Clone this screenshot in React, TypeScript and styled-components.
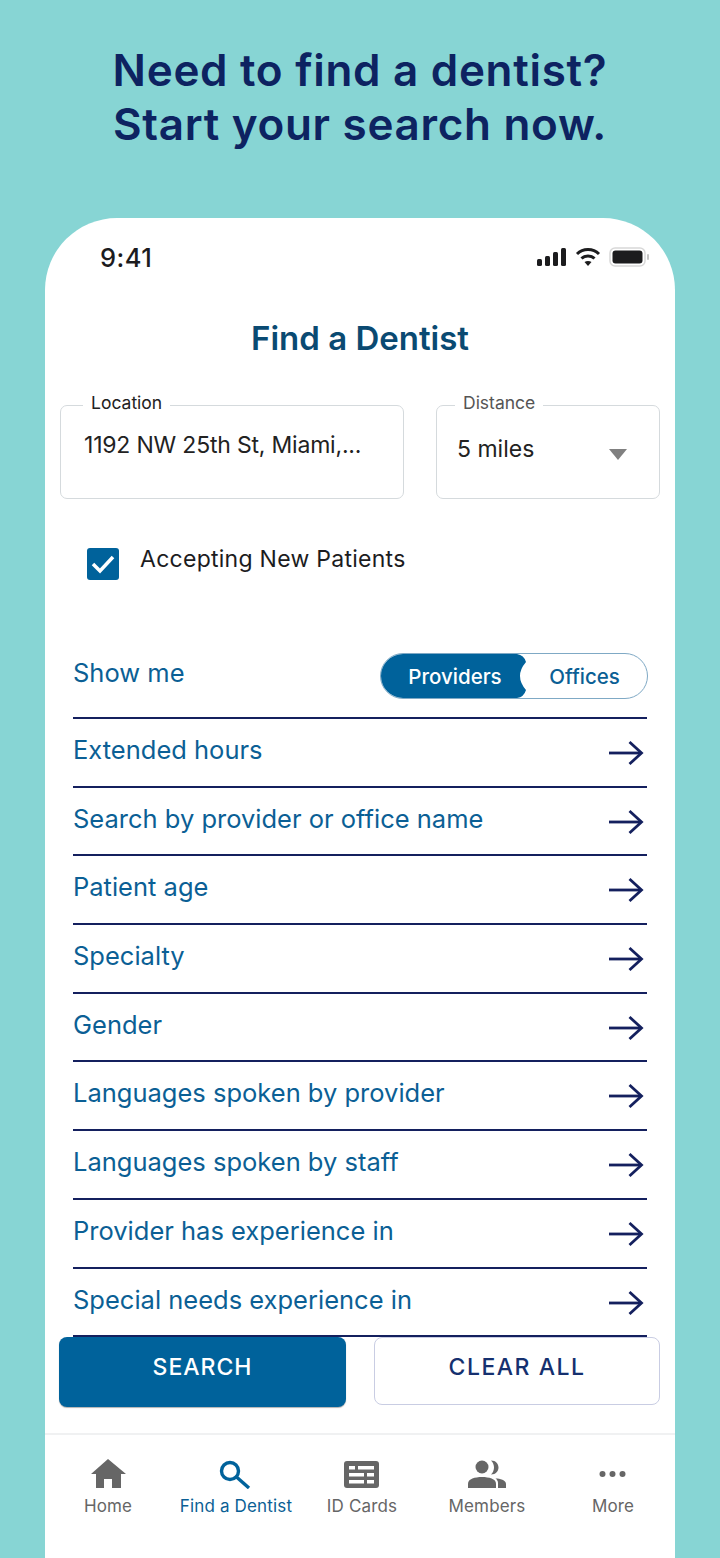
import React from "react";
import styled, {createGlobalStyle} from "styled-components";

const GlobalStyle = createGlobalStyle`
    html, body {
        margin: 0;
        padding: 0;
        background: #87d5d4;
    }

    body {
        font-family: Inter, "Noto Sans", sans-serif;
    }
`

const Page = styled.div`
    width: 720px;
    height: 1558px;
    overflow: hidden;
    display: flex;
    flex-direction: column;
    align-items: center;
    background: #87d5d4;
`

const Headline = styled.h1`
    margin: 43px 0 67px;
    font-size: 44px;
    line-height: 54px;
    font-weight: 600;
    letter-spacing: 0.7px;
    text-align: center;
    color: #0d2361;
`

const Phone = styled.div`
    width: 630px;
    flex: 1;
    display: flex;
    flex-direction: column;
    background: #fff;
    border-radius: 72px 72px 0 0;
`

const StatusBar = styled.div`
    height: 78px;
    padding: 0 25px 0 55px;
    display: flex;
    align-items: center;
    justify-content: space-between;
`

const Time = styled.span`
    font-size: 25.5px;
    font-weight: 500;
    letter-spacing: 0.5px;
    color: #1c1c1e;
`

const StatusIcons = styled.div`
    display: flex;
    align-items: center;
    gap: 8px;
`

const ScreenTitle = styled.h2`
    margin: 22px 0 0;
    font-size: 33px;
    line-height: 40px;
    font-weight: 600;
    text-align: center;
    color: #0a4a72;
`

const FieldRow = styled.div`
    margin-top: 35px;
    padding: 0 15px;
    display: flex;
    justify-content: space-between;
`

const Field = styled.fieldset<{$width: number}>`
    margin: 0;
    padding: 0;
    width: ${p => p.$width}px;
    height: 106px;
    box-sizing: border-box;
    border: 1.5px solid #d5dadd;
    border-radius: 7px;
`

const FieldLegend = styled.legend<{$inset: number; $muted?: boolean}>`
    margin-left: ${p => p.$inset}px;
    padding: 0 8px 4px;
    font-size: 17.5px;
    line-height: 20px;
    color: ${p => (p.$muted ? "#555" : "#222")};
`

const LocationValue = styled.div`
    padding: 13px 0 0 23px;
    font-size: 23px;
    line-height: 30px;
    letter-spacing: -0.2px;
    color: #222;
`

const DistanceValue = styled.div`
    padding: 17px 32px 0 20px;
    display: flex;
    align-items: center;
    justify-content: space-between;
    font-size: 23px;
    line-height: 30px;
    color: #222;
`

const Caret = styled.span`
    margin-top: 10px;
    width: 0;
    height: 0;
    border-left: 9px solid transparent;
    border-right: 9px solid transparent;
    border-top: 11px solid #808080;
`

const CheckRow = styled.div`
    margin-top: 46px;
    padding-left: 42px;
    display: flex;
    align-items: flex-start;
    gap: 21px;
`

const CheckBox = styled.span`
    margin-top: 3px;
    width: 32px;
    height: 32px;
    display: flex;
    align-items: center;
    justify-content: center;
    background: #00629b;
    border-radius: 3px;
`

const CheckLabel = styled.span`
    margin-top: -1px;
    font-size: 23px;
    line-height: 30px;
    letter-spacing: 0.27px;
    color: #1c1c1e;
`

const List = styled.div`
    margin-top: 73px;
    padding: 0 28px;
`

const ShowRow = styled.div`
    height: 64px;
    display: flex;
    align-items: flex-start;
    justify-content: space-between;
    border-bottom: 2px solid #14205e;
`

const RowLabel = styled.span`
    margin-top: 14px;
    font-size: 25.5px;
    line-height: 34px;
    color: #0b5f95;
`

const ShowLabel = styled(RowLabel)`
    margin-top: 3px;
`

const Toggle = styled.div`
    width: 268px;
    height: 46px;
    margin-right: -1px;
    box-sizing: border-box;
    display: flex;
    border: 1px solid #7fa9c5;
    border-radius: 23px;
`

const ToggleOption = styled.span<{$active?: boolean}>`
    box-sizing: border-box;
    display: flex;
    align-items: center;
    justify-content: center;
    font-size: 20.5px;
    font-weight: 500;
    color: ${p => (p.$active ? "#fff" : "#0b5f95")};
    background: ${p => (p.$active ? "#00629b" : "transparent")};
    width: ${p => (p.$active ? 145 : 117)}px;
    ${p => p.$active && `
        padding-left: 3px;
        clip-path: path("M22 0 H136 Q143 1 145 8 Q133 22 145 36 Q143 43 136 44 H22 A22 22 0 0 1 22 0 Z");
    `}
`

const Row = styled.div`
    height: 66.7px;
    display: flex;
    align-items: flex-start;
    justify-content: space-between;
    border-bottom: 2px solid #14205e;
`

const Arrow = styled.svg`
    margin: 21px 3px 0 0;
`

const ButtonRow = styled.div`
    padding: 0 15px 0 14px;
    display: flex;
    justify-content: space-between;
    align-items: flex-start;
`

const SearchButton = styled.div`
    width: 287px;
    height: 70px;
    display: flex;
    align-items: center;
    justify-content: center;
    box-sizing: border-box;
    padding-bottom: 10px;
    background: #00629b;
    border-radius: 8px;
    box-shadow: 0 1px 1px rgba(0, 0, 0, 0.3);
    font-size: 23px;
    font-weight: 500;
    letter-spacing: 1px;
    color: #fff;
`

const ClearButton = styled.div`
    width: 286px;
    height: 68px;
    display: flex;
    align-items: center;
    justify-content: center;
    box-sizing: border-box;
    padding-bottom: 8px;
    background: #fff;
    border: 1px solid #c9cde3;
    border-radius: 8px;
    font-size: 23px;
    font-weight: 500;
    letter-spacing: 1.5px;
    color: #15306f;
`

const TabBar = styled.nav`
    margin-top: 26px;
    flex: 1;
    display: grid;
    grid-template-columns: 126px 130px 122px 128px 124px;
    border-top: 2px solid #f0f1f2;
`

const Tab = styled.div<{$active?: boolean}>`
    padding-top: 24px;
    display: flex;
    flex-direction: column;
    align-items: center;
    gap: 6px;
    font-size: 17px;
    line-height: 22px;
    letter-spacing: 0.15px;
    color: ${p => (p.$active ? "#0b5f95" : "#666")};
`

const TabIcon = styled.svg`
    display: block;
`

const rows = [
    "Extended hours",
    "Search by provider or office name",
    "Patient age",
    "Specialty",
    "Gender",
    "Languages spoken by provider",
    "Languages spoken by staff",
    "Provider has experience in",
    "Special needs experience in",
]

const ArrowIcon = () => (
    <Arrow width="36" height="26" viewBox="0 0 36 26" fill="none" stroke="#14205e" strokeWidth="2.8">
        <path d="M1 13 H33"/>
        <path d="M21.500 2 L33.500 13 L21.500 24"/>
    </Arrow>
)

const tabs = [
    {
        label: "Home",
        icon: <path d="M20 0 L3 15 H8 V29 H16 V20 H24 V29 H33 V15 H38 Z" fill="#666"/>,
    },
    {
        label: "Find a Dentist",
        active: true,
        icon: (
            <g fill="none" stroke="#00629b" strokeWidth="3.4">
                <circle cx="14" cy="12" r="8.500"/>
                <path d="M20.500 18 L33 29"/>
            </g>
        ),
    },
    {
        label: "ID Cards",
        icon: (
            <g>
                <rect x="2" y="2" width="35" height="27" rx="3" fill="#666"/>
                <g fill="#fff">
                    <rect x="7" y="7" width="6" height="3.500"/>
                    <rect x="16" y="7" width="16" height="3.500"/>
                    <rect x="7" y="14" width="15" height="3.500"/>
                    <rect x="25" y="14" width="7" height="3.500"/>
                    <rect x="7" y="21" width="15" height="3.500"/>
                    <rect x="25" y="21" width="7" height="3.500"/>
                </g>
            </g>
        ),
    },
    {
        label: "Members",
        icon: (
            <g fill="#666">
                <circle cx="15" cy="8" r="6.500"/>
                <path d="M24 1.500 C29 1.500 31.500 5 31.500 8.500 C31.500 12 29 15.500 24 15.500 C26 13.500 27 11 27 8.500 C27 6 26 3.500 24 1.500 Z"/>
                <path d="M1 29 V24.500 C1 20 8 18 15 18 C22 18 29 20 29 24.500 V29 Z"/>
                <path d="M31 29 V24 C31 22 30 20.500 28.500 19.500 C33 19.500 39 21 39 25 V29 Z"/>
            </g>
        ),
    },
    {
        label: "More",
        icon: (
            <g fill="#666">
                <circle cx="9.500" cy="15" r="3"/>
                <circle cx="19.500" cy="15" r="3"/>
                <circle cx="29.500" cy="15" r="3"/>
            </g>
        ),
    },
]

export default function App() {
    return (
        <Page>
            <GlobalStyle/>
            <Headline>Need to find a dentist?<br/>Start your search now.</Headline>
            <Phone>
                <StatusBar>
                    <Time>9:41</Time>
                    <StatusIcons>
                        <svg width="30" height="20" viewBox="0 0 30 20" fill="#1c1c1e">
                            <rect x="0" y="12" width="5" height="7" rx="1.500"/>
                            <rect x="8" y="9" width="5" height="10" rx="1.500"/>
                            <rect x="16" y="5" width="5" height="14" rx="1.500"/>
                            <rect x="24" y="1" width="5" height="18" rx="1.500"/>
                        </svg>
                        <svg width="26" height="20" viewBox="0 0 26 20" fill="none" stroke="#1c1c1e" strokeWidth="3">
                            <path d="M2 7 C8 1 18 1 24 7"/>
                            <path d="M6.500 11.500 C10 8 16 8 19.500 11.500"/>
                            <path d="M13 19 L9.500 15 C11.500 13.500 14.500 13.500 16.500 15 Z" fill="#1c1c1e" stroke="none"/>
                        </svg>
                        <svg width="41" height="20" viewBox="0 0 41 20">
                            <rect x="1" y="1" width="35" height="18" rx="5" fill="none" stroke="#d8d8d8" strokeWidth="1.500"/>
                            <rect x="3.500" y="3.500" width="30" height="13" rx="3" fill="#1c1c1e"/>
                            <rect x="38" y="7" width="2" height="6" rx="1" fill="#c4c4c4"/>
                        </svg>
                    </StatusIcons>
                </StatusBar>
                <ScreenTitle>Find a Dentist</ScreenTitle>
                <FieldRow>
                    <Field $width={344}>
                        <FieldLegend $inset={22}>Location</FieldLegend>
                        <LocationValue>1192 NW 25th St, Miami,...</LocationValue>
                    </Field>
                    <Field $width={224}>
                        <FieldLegend $inset={18} $muted>Distance</FieldLegend>
                        <DistanceValue>5 miles<Caret/></DistanceValue>
                    </Field>
                </FieldRow>
                <CheckRow>
                    <CheckBox>
                        <svg width="24" height="20" viewBox="0 0 24 20" fill="none" stroke="#fff" strokeWidth="3.500">
                            <path d="M2 10 L9 17 L22 3"/>
                        </svg>
                    </CheckBox>
                    <CheckLabel>Accepting New Patients</CheckLabel>
                </CheckRow>
                <List>
                    <ShowRow>
                        <ShowLabel>Show me</ShowLabel>
                        <Toggle>
                            <ToggleOption $active>Providers</ToggleOption>
                            <ToggleOption>Offices</ToggleOption>
                        </Toggle>
                    </ShowRow>
                    {rows.map(label => (
                        <Row key={label}>
                            <RowLabel>{label}</RowLabel>
                            <ArrowIcon/>
                        </Row>
                    ))}
                </List>
                <ButtonRow>
                    <SearchButton>SEARCH</SearchButton>
                    <ClearButton>CLEAR ALL</ClearButton>
                </ButtonRow>
                <TabBar>
                    {tabs.map(tab => (
                        <Tab key={tab.label} $active={tab.active}>
                            <TabIcon width="40" height="30" viewBox="0 0 40 30">{tab.icon}</TabIcon>
                            {tab.label}
                        </Tab>
                    ))}
                </TabBar>
            </Phone>
        </Page>
    )
}
